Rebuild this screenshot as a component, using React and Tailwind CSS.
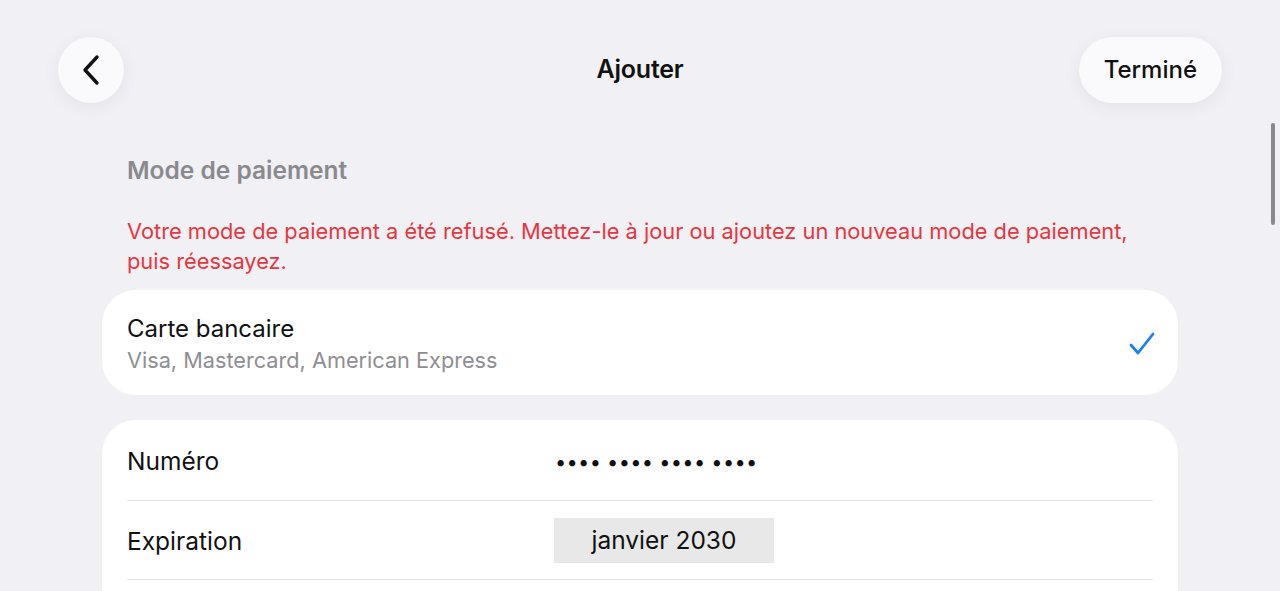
import React from 'react';

function ChevronLeft() {
  return (
    <svg width="20" height="32" viewBox="0 0 20 32" fill="none">
      <path d="M16 3 L4 16 L16 29" stroke="#111" strokeWidth="3.4" strokeLinecap="round" strokeLinejoin="round" />
    </svg>
  );
}

function Check() {
  return (
    <svg width="26" height="24" viewBox="0 0 26 24" fill="none">
      <path d="M2 13 L9 21 L24 2" stroke="#1a7ff2" strokeWidth="2.8" strokeLinecap="round" strokeLinejoin="round" />
    </svg>
  );
}

export default function App() {
  return (
    <div className="relative min-h-screen bg-[#f1f0f5] font-['Inter','Noto_Sans',sans-serif] text-[#111]">
      {/* scroll indicator */}
      <div className="absolute right-[5px] top-[123px] h-[102px] w-[4px] rounded-full bg-[#8a8a8e]" />

      <header className="grid grid-cols-[1fr_auto_1fr] items-center px-[58px] pt-[37px]">
        <div>
          <button className="flex h-[66px] w-[66px] items-center justify-center rounded-full bg-[#fafafc] shadow-[0_4px_18px_rgba(0,0,0,0.06)]">
            <ChevronLeft />
          </button>
        </div>
        <h1 className="text-[25px] font-semibold tracking-[-0.2px]">Ajouter</h1>
        <div className="flex justify-end">
          <button className="h-[66px] rounded-full bg-[#fafafc] px-[25px] text-[24px] font-medium shadow-[0_4px_18px_rgba(0,0,0,0.06)]">
            Terminé
          </button>
        </div>
      </header>

      <main className="mx-auto w-[1076px]">
        <h2 className="mt-[52px] px-[25px] text-[24.5px] font-semibold leading-[30px] text-[#8a8a8e]">
          Mode de paiement
        </h2>
        <p className="mt-[31px] px-[25px] text-[21.8px] leading-[30px] text-[#e8363e]">
          Votre mode de paiement a été refusé. Mettez-le à jour ou ajoutez un nouveau mode de paiement, puis réessayez.
        </p>

        <div className="mt-[14px] flex h-[105px] items-center justify-between rounded-[34px] bg-white px-[25px] pt-[3px]">
          <div>
            <div className="text-[24px] leading-[29px]">Carte bancaire</div>
            <div className="mt-[3px] text-[21.7px] leading-[29px] text-[#8e8e93]">Visa, Mastercard, American Express</div>
          </div>
          <div className="-mr-[2px]">
            <Check />
          </div>
        </div>

        <div className="mt-[25px] rounded-t-[34px] bg-white px-[25px] pb-[20px]">
          <div className="flex h-[81px] items-center border-b border-[#e0e0e2] pt-[3px]">
            <span className="w-[430px] text-[24.5px]">Numéro</span>
            <span className="-translate-x-[2px] text-[20px] tracking-[0.3px]">•••• •••• •••• ••••</span>
          </div>
          <div className="flex h-[79px] items-center border-b border-[#e0e0e2] pt-[3px]">
            <span className="w-[427px] text-[24.5px]">Expiration</span>
            <span className="flex h-[45px] w-[220px] -translate-y-[1px] items-center justify-center bg-[#e8e8e8] text-[24.5px]">
              janvier 2030
            </span>
          </div>
        </div>
      </main>
    </div>
  );
}
